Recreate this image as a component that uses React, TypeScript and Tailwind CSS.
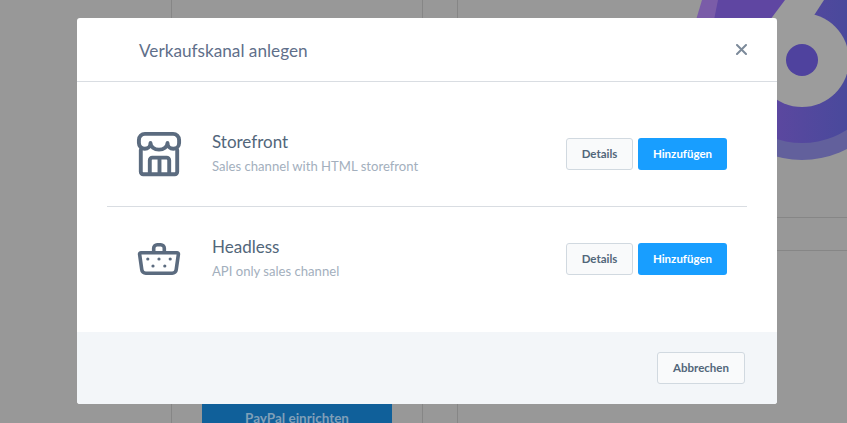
const font = { fontFamily: 'Lato, "Noto Sans", sans-serif' };

function StoreIcon() {
  return (
    <svg width="46" height="46" viewBox="0 0 46 46" fill="none" stroke="#5b6b7f" strokeWidth="3.9" strokeLinejoin="round" strokeLinecap="round">
      <path d="M9 2.9h28a6 6 0 0 1 6.1 6.1v3a5.8 5.8 0 0 1-11.6 0 8.5 6.6 0 0 1-17 0 5.8 5.8 0 0 1-11.6 0V9A6 6 0 0 1 9 2.9z" />
      <path d="M4.8 19v21.8a2.4 2.4 0 0 0 2.4 2.4h31.6a2.4 2.4 0 0 0 2.4-2.4V19" />
      <path d="M13.8 43V29.2a2.6 2.6 0 0 1 2.6-2.6h14.2a2.6 2.6 0 0 1 2.6 2.6V43M23.5 27v16" />
    </svg>
  );
}

function BasketIcon() {
  return (
    <svg width="46" height="36" viewBox="0 0 46 36" fill="none" stroke="#5b6b7f" strokeWidth="3.6" strokeLinejoin="round" strokeLinecap="round">
      <path d="M5 11.7h36a1.4 1.4 0 0 1 1.4 1.6l-2.2 15.4a4 4 0 0 1-4 3.6H9.8a4 4 0 0 1-4-3.6L3.6 13.3A1.4 1.4 0 0 1 5 11.7z" />
      <path d="M17.7 11V7.2a3.5 3.5 0 0 1 3.5-3.5h3.6a3.5 3.5 0 0 1 3.5 3.5V11" />
      <g fill="#5b6b7f" stroke="none">
        <circle cx="11.8" cy="18" r="1.6" />
        <circle cx="23" cy="18" r="1.6" />
        <circle cx="34.2" cy="18" r="1.6" />
        <circle cx="17" cy="25" r="1.6" />
        <circle cx="28.8" cy="25" r="1.6" />
      </g>
    </svg>
  );
}

function CloseIcon() {
  return (
    <svg width="11" height="11" viewBox="0 0 11 11" stroke="#7c8a9a" strokeWidth="2" strokeLinecap="round">
      <path d="M1 1l9 9M10 1l-9 9" />
    </svg>
  );
}

// viewBox uses page coordinates so the shapes are easy to compare with the reference
function Logo() {
  return (
    <svg width="167" height="170" viewBox="680 0 167 170" fill="none">
      <defs>
        <linearGradient id="logo-grad" x1="0" y1="0" x2="1" y2="0">
          <stop offset="0" stopColor="#6a46a2" />
          <stop offset="1" stopColor="#3f4a9a" />
        </linearGradient>
      </defs>
      <circle cx="802" cy="62" r="98" fill="#62609c" />
      <path d="M690 40L702 0h18L712 40z" fill="#7a5ca8" />
      <circle cx="802" cy="60" r="83" fill="url(#logo-grad)" />
      <path d="M712 30L718 0H790V30z" fill="#5f46a2" />
      <circle cx="802" cy="60" r="47" fill="#9c9c9c" />
      <path d="M770 20L785 0h39L811 20z" fill="#9c9c9c" />
      <circle cx="802" cy="60" r="16" fill="#4f429e" />
    </svg>
  );
}

function ChannelRow({ icon, title, text }: { icon: React.ReactNode; title: string; text: string }) {
  return (
    <div className="flex h-[104px] items-center pl-[29px] pr-5">
      <div className="flex w-[76px] justify-start">{icon}</div>
      <div className="flex-1 pb-[2px]">
        <div className="mb-[3px] text-[17px] leading-[22px] text-[#52667a]">{title}</div>
        <div className="text-[13.1px] leading-[20px] text-[#a3afbd]">{text}</div>
      </div>
      <button className="h-[32px] w-[67px] rounded-[3px] border border-[#d1d9e0] bg-[#f9fafb] text-[11.5px] font-bold text-[#52667a]">
        Details
      </button>
      <button className="ml-[5px] h-[32px] w-[89px] rounded-[3px] bg-[#189eff] text-[11.5px] font-bold text-white">
        Hinzufügen
      </button>
    </div>
  );
}

export default function App() {
  return (
    <div className="relative h-[423px] w-[847px] overflow-hidden bg-[#989898]" style={font}>
      <div className="flex h-full">
        <div className="w-[172px] border-r border-[#868686]" />
        <div className="flex w-[251px] flex-col justify-end border-r border-[#868686] px-[30px]">
          <div className="flex h-[19px] items-start justify-center bg-[#10609a] pt-[5px] text-[13.5px] leading-[18px] font-bold text-[#7f9fb8]">
            PayPal einrichten
          </div>
        </div>
        <div className="w-[35px] border-r border-[#868686]" />
        <div className="flex flex-1 flex-col pt-[217px]">
          <div className="h-[34px] border-y border-[#868686]" />
        </div>
      </div>

      <div className="absolute right-0 top-0">
        <Logo />
      </div>

      <div className="absolute left-[77px] top-[18px] flex h-[386px] w-[700px] flex-col overflow-hidden rounded-[3px] bg-white">
        <div className="flex h-[64px] items-center justify-between border-b border-[#d9dde2] pl-[62px] pr-[30px]">
          <span className="mt-[2px] text-[17.2px] text-[#5f6f8a]">Verkaufskanal anlegen</span>
          <CloseIcon />
        </div>

        <div className="flex-1 px-[30px] pt-[20px]">
          <div className="border-b border-[#d9dde2]">
            <ChannelRow icon={<StoreIcon />} title="Storefront" text="Sales channel with HTML storefront" />
          </div>
          <ChannelRow icon={<BasketIcon />} title="Headless" text="API only sales channel" />
        </div>

        <div className="flex h-[72px] items-center justify-end bg-[#f3f6f9] pr-[32px]">
          <button className="h-[32px] w-[88px] rounded-[3px] border border-[#d1d9e0] bg-[#f9fafb] text-[11.5px] font-bold text-[#52667a]">
            Abbrechen
          </button>
        </div>
      </div>
    </div>
  );
}
